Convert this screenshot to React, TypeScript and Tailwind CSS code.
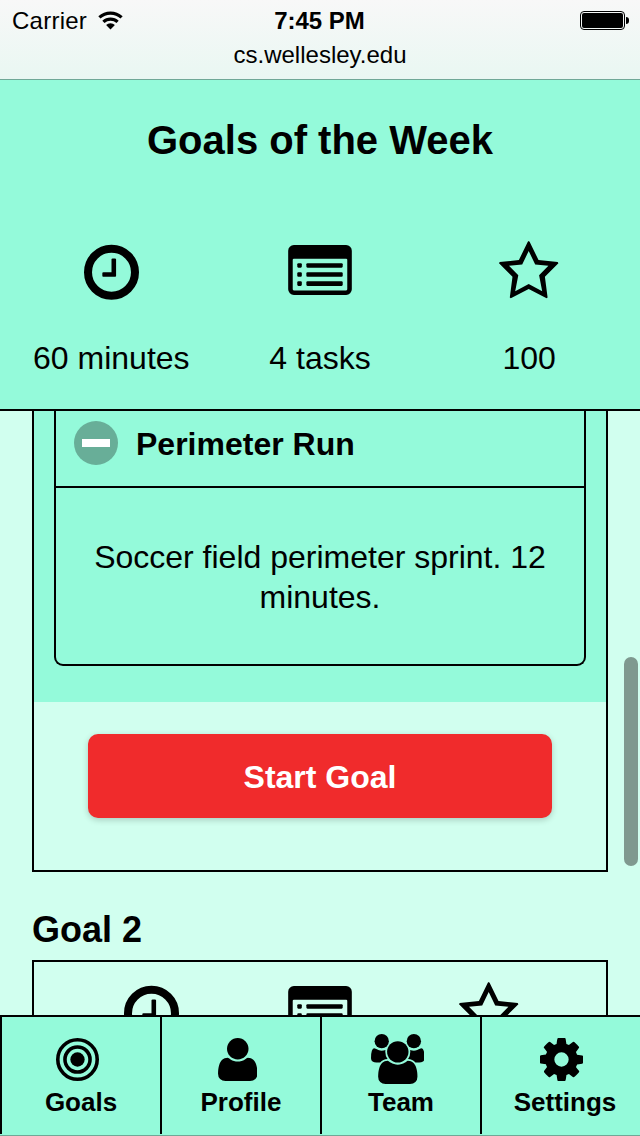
import React from 'react';

interface IconProps {
  className?: string;
}

const BODY_PATH =
  'M1728 1533q0 120-73 189.5t-194 69.5h-874q-121 0-194-69.5t-73-189.5q0-53 3.5-103.5t14-109 26.5-108.5 43-97.5 62-81 85.5-53.5 111.5-20q10 0 43 21.5t73 48 107 48 135 21.5 135-21.5 107-48 73-48 43-21.5q61 0 111.5 20t85.5 53.5 62 81 43 97.5 26.5 108.5 14 109 3.5 103.5z';

function ClockIcon({ className }: IconProps) {
  return (
    <svg className={className} viewBox="0 8 1536 1536" fill="currentColor">
      <circle cx="768" cy="768" r="656" fill="none" stroke="currentColor" strokeWidth="224" />
      <path d="M896 416v448q0 14-9 23t-23 9h-320q-14 0-23-9t-9-23v-64q0-14 9-23t23-9h224v-352q0-14 9-23t23-9h64q14 0 23 9t9 23z" />
    </svg>
  );
}

function ListIcon({ className }: IconProps) {
  return (
    <svg className={className} viewBox="0 0 1792 1408" fill="currentColor">
      <path
        fillRule="evenodd"
        d="M160 0h1472q66 0 113 47t47 113v1088q0 66-47 113t-113 47H160q-66 0-113-47T0 1248V160Q0 94 47 47T160 0zM160 384q-32 0-32 32v832q0 32 32 32h1472q32 0 32-32V416q0-32-32-32z"
      />
      {[512, 768, 1024].map((y) => (
        <g key={y}>
          <rect x="256" y={y} width="128" height="128" rx="32" />
          <rect x="512" y={y} width="1024" height="128" rx="32" />
        </g>
      ))}
    </svg>
  );
}

function StarIcon({ className }: IconProps) {
  return (
    <svg className={className} viewBox="0 0 60 58" fill="currentColor">
      <path
        fillRule="evenodd"
        d="M29.7 0L30.6 0.8L39.5 19L58.7 21.1L59.4 22.3L45.9 35.7L48.6 56.4L47.6 57.2L29.7 47.9L11.8 57.2L10.8 56.4L13.5 35.7L0 22.3L0.7 21.1L19.9 19L28.8 0.8zM29.7 10L23.2 23.4L10 24.7L19.3 34.3L16.2 50.2L29.7 43L43.2 50.2L40.1 34.3L49.4 24.7L36.2 23.4z"
      />
    </svg>
  );
}

function TargetIcon({ className }: IconProps) {
  return (
    <svg className={className} viewBox="0 0 1536 1536" fill="none" stroke="currentColor" strokeWidth="128">
      <circle cx="768" cy="768" r="704" />
      <circle cx="768" cy="768" r="448" />
      <circle cx="768" cy="768" r="256" fill="currentColor" stroke="none" />
    </svg>
  );
}

function UserIcon({ className }: IconProps) {
  return (
    <svg className={className} viewBox="320 256 1408 1536" fill="currentColor">
      <path d={BODY_PATH} />
      <circle cx="1024" cy="640" r="384" />
    </svg>
  );
}

function TeamIcon({ className }: IconProps) {
  return (
    <svg className={className} viewBox="64 0 1920 1792" fill="currentColor">
      <path d="M657 896q-162 5-265 128h-134q-82 0-138-40.5t-56-118.5q0-353 124-353 6 0 43.5 21t97.5 42.5 119 21.5q67 0 133-23-5 37-5 66 0 159 81 256z" />
      <path d="M1391 896q162 5 265 128h134q82 0 138-40.5t56-118.5q0-353-124-353-6 0-43.5 21t-97.5 42.5-119 21.5q-67 0-133-23 5 37 5 66 0 159-81 256z" />
      <circle cx="448" cy="256" r="256" />
      <circle cx="1600" cy="256" r="256" />
      <path d={BODY_PATH} />
      <circle cx="1024" cy="640" r="384" />
    </svg>
  );
}

function GearIcon({ className }: IconProps) {
  return (
    <svg className={className} viewBox="128 128 1536 1536" fill="currentColor">
      <path d="M1152 896q0-106-75-181t-181-75-181 75-75 181 75 181 181 75 181-75 75-181zm512-109v222q0 12-8 23t-20 13l-185 28q-19 54-39 91 35 50 107 138 10 12 10 25t-9 23q-27 37-99 108t-94 71q-12 0-26-9l-138-108q-44 23-91 38-16 136-29 186-7 28-36 28h-222q-14 0-24.5-8.5t-11.5-21.5l-28-184q-49-16-90-37l-141 107q-10 9-25 9-14 0-25-11-126-114-165-168-7-10-7-23 0-12 8-23 15-21 51-66.5t54-70.5q-27-50-41-99l-183-27q-13-2-21-12.5t-8-23.5v-222q0-12 8-23t19-13l186-28q14-46 39-92-40-57-107-138-10-12-10-24 0-10 9-23 26-36 98.5-107.5t94.5-71.5q13 0 26 10l138 107q44-23 91-38 16-136 29-186 7-28 36-28h222q14 0 24.5 8.5t11.5 21.5l28 184q49 16 90 37l142-107q9-9 24-9 13 0 25 10 129 119 165 170 7 8 7 22 0 12-8 23-15 21-51 66.5t-54 70.5q26 50 41 98l183 28q13 2 21 12.5t8 23.5z" />
    </svg>
  );
}

function WifiIcon({ className }: IconProps) {
  return (
    <svg className={className} viewBox="0 0 25 19" fill="none" stroke="currentColor" strokeWidth="3.2">
      <path d="M1.4 6.4a16.4 16.4 0 0 1 22.2 0" />
      <path d="M5.4 10.9a10.4 10.4 0 0 1 14.2 0" />
      <path d="M12.5 18.4l-4.4-4.3a6 6 0 0 1 8.8 0z" fill="currentColor" stroke="none" />
    </svg>
  );
}

function StatusBar() {
  return (
    <div className="h-20 shrink-0 border-b border-[#6fa897] bg-linear-to-b from-[#f8f8f8] to-[#e9f7f2] text-2xl leading-7">
      <div className="grid h-[41px] grid-cols-3 items-center pl-[11px] pr-[11px]">
        <div className="flex items-center gap-[11px] pl-px">
          <span className="tracking-[0.25px]">Carrier</span>
          <WifiIcon className="h-[19px] w-[25px]" />
        </div>
        <span className="pr-px text-center font-bold">7:45 PM</span>
        <div className="flex items-center justify-end gap-px">
          <div className="h-[19px] w-[45px] rounded-[4px] border border-black p-px">
            <div className="h-full rounded-[2px] bg-black" />
          </div>
          <div className="h-[7px] w-[3px] rounded-r-full bg-black" />
        </div>
      </div>
      <p className="text-center">cs.wellesley.edu</p>
    </div>
  );
}

function GoalSummary() {
  return (
    <header className="h-[331px] shrink-0 border-b-2 border-black bg-[#94fada]">
      <h1 className="pt-[37px] text-center text-[40px] font-bold leading-[46px]">Goals of the Week</h1>
      <div className="mt-[77px] grid grid-cols-3 px-[7px] text-center text-[32px] leading-10">
        <div className="flex flex-col items-center">
          <div className="flex h-[98px] items-start pt-[5px]">
            <ClockIcon className="h-[55px] w-[55px] overflow-visible" />
          </div>
          <span>60 minutes</span>
        </div>
        <div className="flex flex-col items-center">
          <div className="flex h-[98px] items-start pt-[5px]">
            <ListIcon className="h-[50px] w-16" />
          </div>
          <span>4 tasks</span>
        </div>
        <div className="flex flex-col items-center">
          <div className="flex h-[98px] items-start pt-px">
            <StarIcon className="h-[58px] w-[60px]" />
          </div>
          <span className="pl-px">100</span>
        </div>
      </div>
    </header>
  );
}

function GoalCard() {
  return (
    <section className="mx-8 h-[461px] border-2 border-t-0 border-black">
      <div className="h-[291px] bg-[#94fada] px-5">
        <div className="h-[255px] rounded-b-[9px] border-2 border-t-0 border-black">
          <div className="flex h-[77px] items-start gap-[18px] border-b-2 border-black pl-[18px] pt-2.5">
            <span className="flex h-11 w-11 items-center justify-center rounded-full bg-[#68ae98]">
              <span className="h-2 w-7 bg-white" />
            </span>
            <h2 className="pt-[3px] text-[32px] font-bold leading-10">Perimeter Run</h2>
          </div>
          <p className="px-8 pt-[49px] text-center text-[32px] leading-10">
            Soccer field perimeter sprint. 12 minutes.
          </p>
        </div>
      </div>
      <div className="px-[54px] pt-8">
        <button className="h-[84px] w-full rounded-[10px] bg-[#f02b2c] pt-0.5 text-[32px] font-bold text-white shadow-[0_2px_6px_rgba(0,0,0,0.2)]">
          Start Goal
        </button>
      </div>
    </section>
  );
}

function NextGoal() {
  return (
    <section className="mx-8">
      <h2 className="pt-[37px] text-4xl font-bold leading-[41px]">Goal 2</h2>
      <div className="mt-2.5 h-80 border-2 border-black px-[33px] pt-[19px]">
        <div className="grid grid-cols-3 justify-items-center">
          <ClockIcon className="mt-[5px] h-[55px] w-[55px] overflow-visible" />
          <ListIcon className="mt-[5px] h-[50px] w-16" />
          <StarIcon className="mt-px h-[58px] w-[60px]" />
        </div>
      </div>
    </section>
  );
}

const tabs = [
  { label: 'Goals', icon: <TargetIcon className="h-[43px] w-[43px]" /> },
  { label: 'Profile', icon: <UserIcon className="h-[43px] w-[39.5px]" /> },
  { label: 'Team', icon: <TeamIcon className="h-[50px] w-[53.6px]" /> },
  { label: 'Settings', icon: <GearIcon className="h-[43px] w-[43px]" /> },
];

function TabBar() {
  return (
    <nav className="h-[121px] shrink-0 border-b border-[#6fa897] bg-[#94fada] pb-px">
      <div className="flex h-full border-t-2 border-black">
        {tabs.map((tab) => (
          <a
            key={tab.label}
            className="flex w-40 flex-col items-center border-l-2 border-black text-[26px] font-bold leading-[30px] last:pl-2"
          >
            <span className="flex h-[84px] items-center justify-center pr-[7px]">{tab.icon}</span>
            <span className="-mt-[14px]">{tab.label}</span>
          </a>
        ))}
      </div>
    </nav>
  );
}

export default function App() {
  return (
    <div className="relative flex h-[1136px] w-[640px] flex-col overflow-hidden bg-[#d1ffef] font-['Liberation_Sans',Arial,sans-serif] text-black">
      <StatusBar />
      <GoalSummary />
      <main className="min-h-0 flex-1 overflow-hidden">
        <GoalCard />
        <NextGoal />
      </main>
      <TabBar />
      {/* scroll indicator */}
      <div className="absolute right-0.5 top-[657px] h-[209px] w-3.5 rounded-full bg-[#7f998f]" />
    </div>
  );
}
